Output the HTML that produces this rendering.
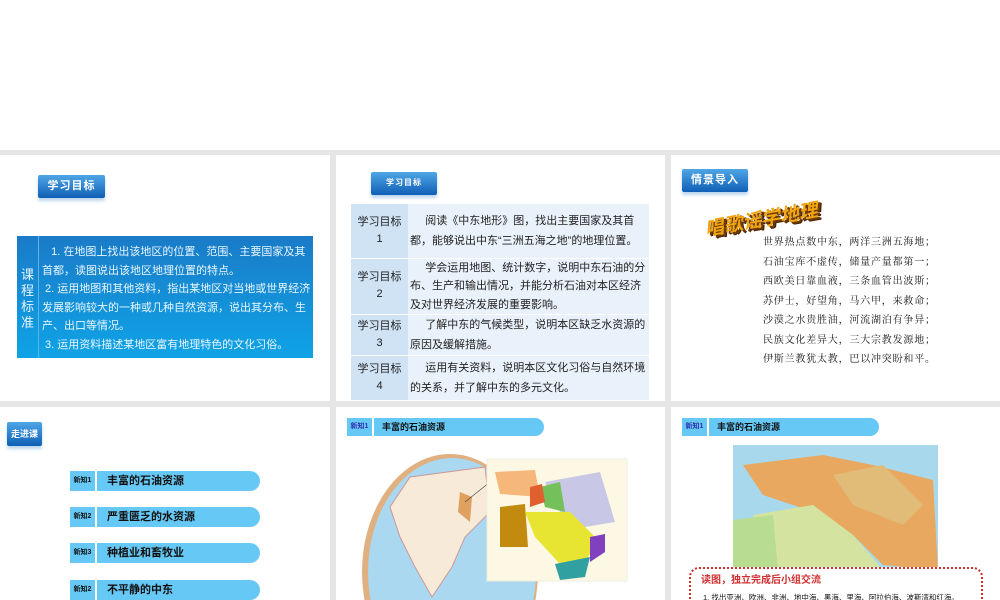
<!DOCTYPE html>
<html><head><meta charset="utf-8"><style>
*{margin:0;padding:0;box-sizing:border-box}
html,body{width:1000px;height:600px;overflow:hidden}
body{background:#fff;position:relative;font-family:"Liberation Sans","Noto Sans CJK SC",sans-serif}
.a{position:absolute}
.gray{background:#e6e6e6}
.badge{position:absolute;background:linear-gradient(#4fa6e6,#0f5fb5);color:#fff;font-weight:bold;font-size:11px;text-align:center;border-radius:2px;box-shadow:0 3px 3px #bcd6ee;letter-spacing:1px}
.pill{position:absolute;background:#66c8f5;border-radius:0 11px 11px 0;height:20px;font-size:11px;font-weight:bold;color:#111}
.pill .n{position:absolute;left:0;top:0;height:100%;width:27px;border-right:2px solid #fff;font-size:7px;line-height:20px;text-align:center;border-radius:8px 0 0 8px;background:#66c8f5}
.pill .t{position:absolute;left:37px;top:0;line-height:20px}
.poem div{height:19.5px;font-size:10px;letter-spacing:0.8px;font-family:"Liberation Serif","Noto Serif CJK SC",serif;color:#111;white-space:nowrap}
td{font-size:11px;color:#222;line-height:17px}
</style></head><body>
<div class="a gray" style="left:0;top:150px;width:1000px;height:5px"></div>
<div class="a gray" style="left:0;top:401px;width:1000px;height:6px"></div>
<div class="a gray" style="left:330px;top:150px;width:6px;height:450px"></div>
<div class="a gray" style="left:665px;top:150px;width:6px;height:450px"></div>

<!-- panel1 -->
<div class="badge" style="left:38px;top:175px;width:67px;height:23px;line-height:23px">学习目标</div>
<div class="a" style="left:17px;top:236px;width:296px;height:122px;background:linear-gradient(#1a7bc8,#0fa3e6);overflow:hidden">
 <div class="a" style="left:0;top:0;width:22px;height:122px;border-right:1px solid #5fb4e6;color:#e6f4ff;font-size:13px;line-height:16px;text-align:center;padding-top:31px">课<br>程<br>标<br>准</div>
 <div class="a" style="left:25px;top:7px;width:272px;color:#e8f6ff;font-size:11px;line-height:18.5px">&nbsp;&nbsp;&nbsp;1. 在地图上找出该地区的位置、范围、主要国家及其首都，读图说出该地区地理位置的特点。<br>&nbsp;2. 运用地图和其他资料，指出某地区对当地或世界经济发展影响较大的一种或几种自然资源，说出其分布、生产、出口等情况。<br>&nbsp;3. 运用资料描述某地区富有地理特色的文化习俗。</div>
</div>

<!-- panel2 -->
<div class="badge" style="left:371px;top:172px;width:66px;height:23px;line-height:22px;font-size:8px">学习目标</div>
<table class="a" style="left:351px;top:204px;width:298px;border-collapse:collapse">
<tr style="height:54px"><td style="background:#cfe3f5;width:57px;text-align:center;border-bottom:1px solid #fff">学习目标<br>1</td><td style="background:#e9f2fb;padding-left:2px;border-bottom:1px solid #fff;line-height:20px">&nbsp;&nbsp;&nbsp;&nbsp;&nbsp;阅读《中东地形》图，找出主要国家及其首都，能够说出中东“三洲五海之地”的地理位置。</td></tr>
<tr style="height:55px"><td style="background:#cfe3f5;text-align:center;border-bottom:1px solid #fff">学习目标<br>2</td><td style="background:#e9f2fb;padding-left:2px;border-bottom:1px solid #fff;line-height:18.5px">&nbsp;&nbsp;&nbsp;&nbsp;&nbsp;学会运用地图、统计数字，说明中东石油的分布、生产和输出情况，并能分析石油对本区经济及对世界经济发展的重要影响。</td></tr>
<tr style="height:40px"><td style="background:#cfe3f5;text-align:center;border-bottom:1px solid #fff">学习目标<br>3</td><td style="background:#e9f2fb;padding-left:2px;border-bottom:1px solid #fff;line-height:20px">&nbsp;&nbsp;&nbsp;&nbsp;&nbsp;了解中东的气候类型，说明本区缺乏水资源的原因及缓解措施。</td></tr>
<tr style="height:44px"><td style="background:#cfe3f5;text-align:center">学习目标<br>4</td><td style="background:#e9f2fb;padding-left:2px;line-height:20px">&nbsp;&nbsp;&nbsp;&nbsp;&nbsp;运用有关资料，说明本区文化习俗与自然环境的关系，并了解中东的多元文化。</td></tr>
</table>

<!-- panel3 -->
<div class="badge" style="left:682px;top:169px;width:66px;height:23px;line-height:23px">情景导入</div>
<div class="a" style="left:704px;top:205px;font-size:19px;font-weight:bold;color:#f2a40e;transform:rotate(-10deg);text-shadow:2px 2px 0 #6b3a06,3px 3px 0 #4a2304;font-style:italic">唱歌谣学地理</div>
<div class="a poem" style="left:763px;top:233px">
<div>世界热点数中东，两洋三洲五海地；</div>
<div>石油宝库不虚传，储量产量都第一；</div>
<div>西欧美日靠血液，三条血管出波斯；</div>
<div>苏伊士，好望角，马六甲，来救命；</div>
<div>沙漠之水贵胜油，河流湖泊有争异；</div>
<div>民族文化差异大，三大宗教发源地；</div>
<div>伊斯兰教犹太教，巴以冲突盼和平。</div>
</div>

<!-- row2 panel1 -->
<div class="badge" style="left:7px;top:422px;width:35px;height:24px;line-height:24px;font-size:9px;letter-spacing:0">走进课堂</div>
<div class="pill" style="left:70px;top:471px;width:190px"><span class="n">新知1</span><span class="t">丰富的石油资源</span></div>
<div class="pill" style="left:70px;top:507px;width:190px"><span class="n">新知2</span><span class="t">严重匮乏的水资源</span></div>
<div class="pill" style="left:70px;top:543px;width:190px"><span class="n">新知3</span><span class="t">种植业和畜牧业</span></div>
<div class="pill" style="left:70px;top:580px;width:190px"><span class="n">新知2</span><span class="t">不平静的中东</span></div>

<!-- row2 panel2 -->
<div class="pill" style="left:347px;top:418px;width:197px;height:18px"><span class="n" style="line-height:18px;color:#3030b0">新知1</span><span class="t" style="line-height:18px;left:35px;font-size:9px">丰富的石油资源</span></div>
<svg class="a" style="left:360px;top:452px" width="290" height="148">
<ellipse cx="90" cy="120" rx="88" ry="118" fill="#e0b080"/>
<ellipse cx="92" cy="120" rx="84" ry="114" fill="#a9d8f0"/>
<path d="M50 25 L125 15 L130 60 L105 85 L92 115 L72 145 L55 115 L40 85 L30 55Z" fill="#f7ead8" stroke="#c99"/>
<path d="M100 40 L112 45 L110 70 L98 60Z" fill="#e0a060"/>
<line x1="105" y1="50" x2="130" y2="30" stroke="#444" stroke-width=".6"/>
<rect x="127" y="7" width="140" height="122" fill="#fdf8e4" stroke="#eed"/>
<path d="M135 20 L175 18 L180 45 L140 42Z" fill="#f6b77a"/>
<path d="M185 30 L240 20 L255 70 L225 75 L200 60Z" fill="#c8c8e6"/>
<path d="M180 35 L200 30 L205 60 L185 55Z" fill="#74c05a"/>
<path d="M170 35 L182 32 L185 50 L170 55Z" fill="#e06030"/>
<path d="M140 55 L165 52 L168 95 L140 95Z" fill="#c38a10"/>
<path d="M165 60 L210 60 L240 90 L220 115 L200 112 L175 85Z" fill="#e7e532"/>
<path d="M230 85 L245 82 L245 100 L230 110Z" fill="#8040c0"/>
<path d="M195 112 L230 105 L225 125 L200 128Z" fill="#30a0a0"/>
</svg>

<!-- row2 panel3 -->
<div class="pill" style="left:682px;top:418px;width:197px;height:18px"><span class="n" style="line-height:18px;color:#3030b0">新知1</span><span class="t" style="line-height:18px;left:35px;font-size:9px">丰富的石油资源</span></div>
<svg class="a" style="left:733px;top:445px" width="205" height="125">
<rect width="205" height="125" fill="#a8d8ec"/>
<path d="M10 20 L90 10 L140 20 L200 35 L205 125 L150 120 L120 90 L90 70 L60 60 L30 50Z" fill="#e8a860"/>
<path d="M20 70 L80 60 L120 90 L150 125 L30 125Z" fill="#d4e4a0"/>
<path d="M0 75 L40 70 L45 125 L0 125Z" fill="#b8dc90"/>
<path d="M100 30 L150 20 L190 60 L170 80 L120 60Z" fill="#e0bc78"/>
</svg>
<div class="a" style="left:689px;top:567px;width:294px;height:33px;border:2px dotted #d03030;border-bottom:none;border-radius:10px 10px 0 0;background:#fff">
<div style="color:#d03030;font-size:10px;font-weight:bold;margin:2px 0 0 10px">读图，独立完成后小组交流</div>
<div style="font-size:7.5px;color:#111;margin:6px 0 0 12px">1. 找出亚洲、欧洲、非洲、地中海、黑海、里海、阿拉伯海、波斯湾和红海。</div>
</div>
</body></html>
